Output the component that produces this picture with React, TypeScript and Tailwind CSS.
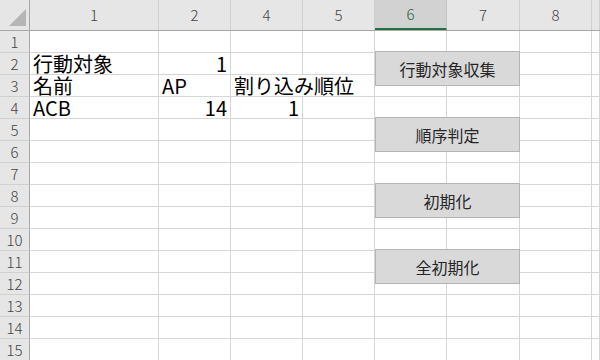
import React from 'react';

const font = { fontFamily: '"Noto Sans CJK JP", "Noto Sans", sans-serif' };

const colWidths = ['w-[129px]', 'w-[72px]', 'w-[72px]', 'w-[72px]', 'w-[72px]', 'w-[73px]', 'w-[72px]', 'flex-1'];
const colLabels = ['1', '2', '4', '5', '6', '7', '8', ''];

type Cell = { text: string; right?: boolean; noBorder?: boolean };
const data: Record<number, Record<number, Cell>> = {
  2: { 0: { text: '行動対象' }, 1: { text: '1', right: true } },
  3: { 0: { text: '名前' }, 1: { text: 'AP' }, 2: { text: '割り込み順位', noBorder: true } },
  4: { 0: { text: 'ACB' }, 1: { text: '14', right: true }, 2: { text: '1', right: true } },
};

const buttons = [
  { label: '行動対象収集', top: 'top-[51px]' },
  { label: '順序判定', top: 'top-[117px]' },
  { label: '初期化', top: 'top-[183px]' },
  { label: '全初期化', top: 'top-[249px]' },
];

function App() {
  const rows = Array.from({ length: 15 }, (_, i) => i + 1);
  return (
    <div className="relative w-[600px] h-[360px] overflow-hidden bg-white" style={font}>
      {/* column headers */}
      <div className="flex h-[31px] bg-[#e6e6e6] border-b border-[#a8a8a8]">
        <div className="w-[30px] shrink-0 border-r border-[#a8a8a8] relative">
          <svg width="30" height="30" className="absolute left-0 top-0">
            <polygon points="26,9 26,26 9,26" fill="#b5b5b5" />
          </svg>
        </div>
        {colLabels.map((c, i) => (
          <div
            key={i}
            className={`${colWidths[i]} shrink-0 flex items-center justify-center text-[15px] font-light ${
              c === '6'
                ? 'bg-[#d2d2d2] text-[#2e5f41] border-b-2 border-b-[#217346] border-r border-r-[#c4c4c4]'
                : 'text-[#444] border-r border-[#d0d0d0]'
            }`}
          >
            {c}
          </div>
        ))}
      </div>

      {rows.map((r) => (
        <div key={r} className="flex h-[22px]">
          <div className="w-[30px] shrink-0 bg-[#e6e6e6] border-r border-b border-r-[#a8a8a8] border-b-[#d0d0d0] flex items-center justify-center text-[15px] font-light text-[#444] leading-none">
            {r}
          </div>
          {colWidths.map((w, ci) => {
            const cell = data[r]?.[ci];
            return (
              <div
                key={ci}
                className={`${w} shrink-0 border-b border-[#d6d6d6] ${cell?.noBorder ? '' : 'border-r'} relative flex items-end px-[3px] text-[20px] leading-[21px] text-black whitespace-nowrap ${
                  cell?.right ? 'justify-end' : 'justify-start'
                }`}
              >
                {cell && <span className="relative z-10">{cell.text}</span>}
              </div>
            );
          })}
        </div>
      ))}

      {buttons.map((b) => (
        <div
          key={b.label}
          className={`absolute left-[375px] ${b.top} w-[145px] h-[35px] bg-[#d9d9d9] border border-[#b4b4b4] flex items-center justify-center text-[16px] text-[#262626]`}
        >
          {b.label}
        </div>
      ))}
    </div>
  );
}

export default App;
